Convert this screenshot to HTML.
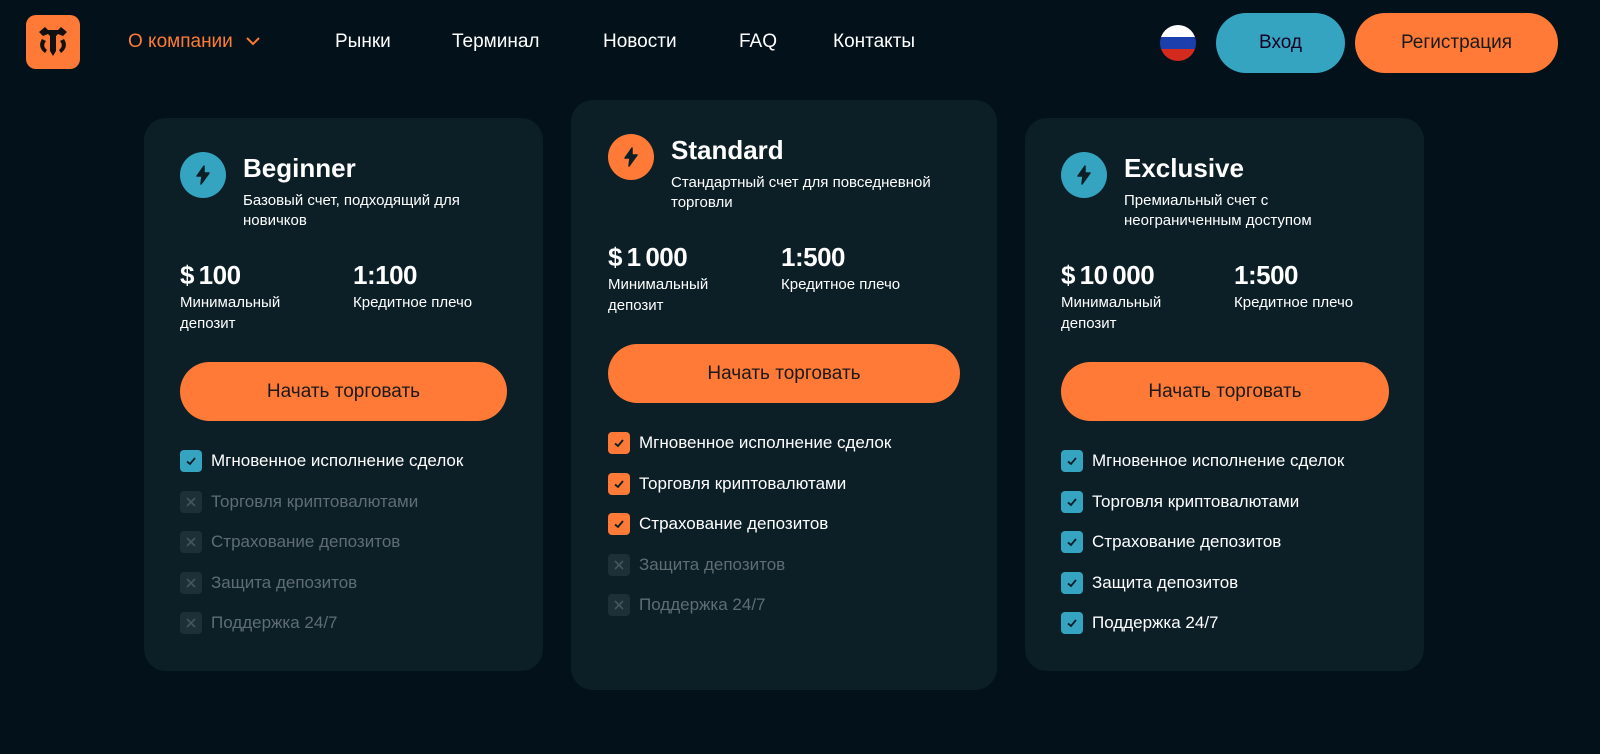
<!DOCTYPE html>
<html><head><meta charset="utf-8"><style>
*{margin:0;padding:0;box-sizing:border-box}
body{width:1600px;height:754px;background:#03121a;font-family:"Liberation Sans",sans-serif;color:#fff;position:relative;overflow:hidden}
.abs{position:absolute}
.nav{font-size:19px;top:31px;color:#fff;font-weight:500}
.card{position:absolute;background:#0c1f27;border-radius:22px}
.ic{position:absolute;width:46px;height:46px;border-radius:50%;display:flex;align-items:center;justify-content:center}
.t{position:absolute;font-size:26px;font-weight:bold}
.d{position:absolute;font-size:15px;line-height:20px}
.p{position:absolute;font-size:26px;font-weight:bold;letter-spacing:-0.5px}
.l{position:absolute;font-size:15px;line-height:21px}
.btn{position:absolute;background:#ff7a36;border-radius:30px;color:#1a1a1a;font-size:19px;display:flex;align-items:center;justify-content:center}
.li{position:absolute;font-size:17px;display:flex;align-items:center;height:22px}
.cb{width:22px;height:22px;border-radius:4px;margin-right:9px;display:flex;align-items:center;justify-content:center}
.on{color:#fff}.off{color:#5f6d73}
.off .cb{background:#1d2f37}
</style></head><body>
<div class="abs" style="left:26px;top:15px;width:54px;height:54px;background:#ff7a36;border-radius:10px">
<svg width="54" height="54" viewBox="0 0 54 54"><path d="M13 17 L19 12 L22 15 L32 15 L35 12 L41 17 L37 21 L32 19 L30 21 L30 36 L27 41 L24 36 L24 21 L22 19 L17 21 Z" fill="#111"/><path d="M16 24 Q11 32 19 38 L21 35 Q16 31 20 26Z M38 24 Q43 32 35 38 L33 35 Q38 31 34 26Z" fill="#111"/></svg></div>
<div class="abs nav" style="left:128px;color:#ff7a36">О компании <svg width="18" height="12" style="margin-left:6px" viewBox="0 0 18 12"><path d="M3 3 L9 9 L15 3" stroke="#ff7a36" stroke-width="2" fill="none"/></svg></div>
<div class="abs nav" style="left:335px">Рынки</div>
<div class="abs nav" style="left:452px">Терминал</div>
<div class="abs nav" style="left:603px">Новости</div>
<div class="abs nav" style="left:739px">FAQ</div>
<div class="abs nav" style="left:833px">Контакты</div>
<div class="abs" style="left:1160px;top:25px;width:36px;height:36px;border-radius:50%;overflow:hidden;background:linear-gradient(#fff 0 33%,#1c3fae 33% 66%,#d52b1e 66%)"></div>
<div class="abs" style="left:1216px;top:13px;width:129px;height:60px;border-radius:30px;background:#35a4c0;color:#102;font-size:19px;display:flex;align-items:center;justify-content:center">Вход</div>
<div class="abs" style="left:1355px;top:13px;width:203px;height:60px;border-radius:30px;background:#ff7a36;color:#1a1a1a;font-size:19px;display:flex;align-items:center;justify-content:center">Регистрация</div>

<div class="card" style="left:144px;top:118px;width:399px;height:553px"></div>
<div class="card" style="left:571px;top:100px;width:426px;height:590px"></div>
<div class="card" style="left:1025px;top:118px;width:399px;height:553px"></div>
<div id="c"></div>
<script>
const bolt='<svg width="20" height="22" viewBox="0 0 20 22"><path d="M11 2 L4 12 L9 12 L8 20 L16 9 L11 9 Z" fill="#0c1f27" stroke="#0c1f27" stroke-width="1.5" stroke-linejoin="round"/></svg>';
const items=["Мгновенное исполнение сделок","Торговля криптовалютами","Страхование депозитов","Защита депозитов","Поддержка 24/7"];
const cards=[
{x:180,y:0,c:'#35a4c0',t:'Beginner',d:'Базовый счет, подходящий для<br>новичков',p:'$\u2009100',lv:'1:100',bw:327,n:1},
{x:608,y:-18,c:'#ff7a36',t:'Standard',d:'Стандартный счет для повседневной<br>торговли',p:'$\u20091\u2009000',lv:'1:500',bw:352,n:3},
{x:1061,y:0,c:'#35a4c0',t:'Exclusive',d:'Премиальный счет с<br>неограниченным доступом',p:'$\u200910\u2009000',lv:'1:500',bw:328,n:5}];
let h='';
for(const k of cards){const X=k.x,Y=k.y;
h+=`<div class="ic" style="left:${X}px;top:${152+Y}px;background:${k.c}">${bolt}</div>
<div class="t" style="left:${X+63}px;top:${153+Y}px">${k.t}</div>
<div class="d" style="left:${X+63}px;top:${191+Y}px">${k.d}</div>
<div class="p" style="left:${X}px;top:${260+Y}px">${k.p}</div>
<div class="p" style="left:${X+173}px;top:${260+Y}px">${k.lv}</div>
<div class="l" style="left:${X}px;top:${292+Y}px">Минимальный<br>депозит</div>
<div class="l" style="left:${X+173}px;top:${292+Y}px">Кредитное плечо</div>
<div class="btn" style="left:${X}px;top:${362+Y}px;width:${k.bw}px;height:59px">Начать торговать</div>`;
items.forEach((s,i)=>{const on=i<k.n;
h+=`<div class="li ${on?'on':'off'}" style="left:${X}px;top:${450+i*40.6+Y}px"><div class="cb" style="${on?'background:'+k.c:''}">${on?'<svg width="14" height="14" viewBox="0 0 14 14"><path d="M3 7.5 L6 10 L11 4" stroke="#0c1f27" stroke-width="1.8" fill="none"/></svg>':'<svg width="12" height="12" viewBox="0 0 12 12"><path d="M2 2 L10 10 M10 2 L2 10" stroke="#46555c" stroke-width="1.6"/></svg>'}</div>${s}</div>`;});
}
document.getElementById('c').innerHTML=h;
</script>
</body></html>
